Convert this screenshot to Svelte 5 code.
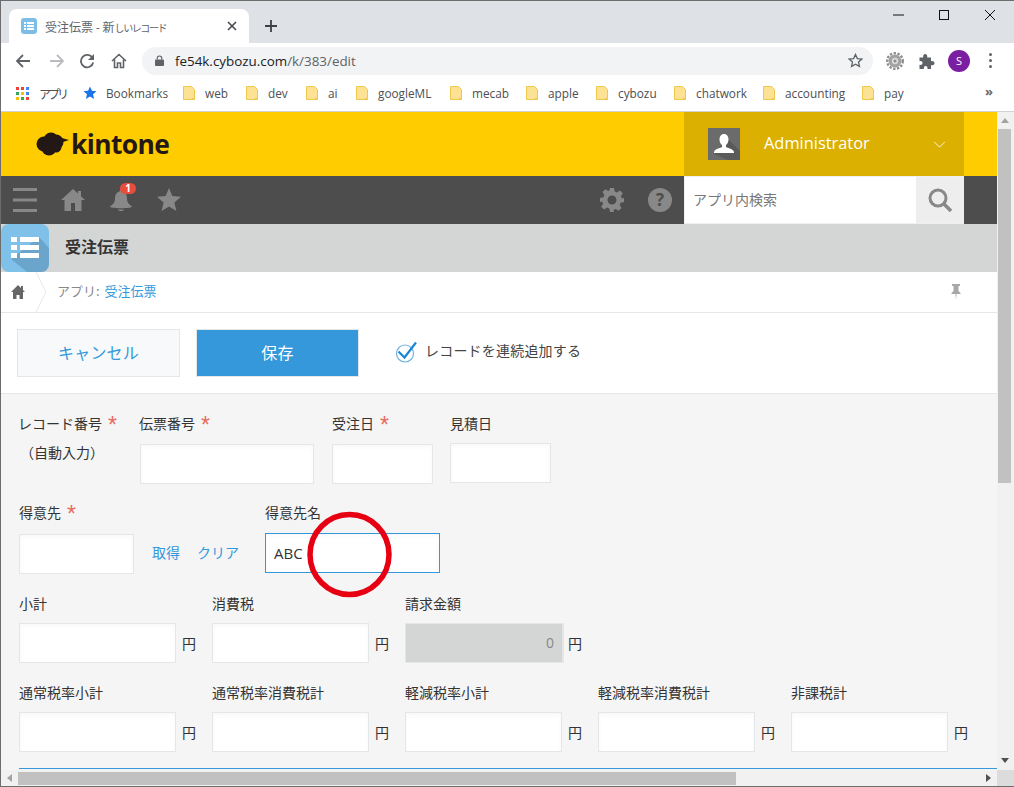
<script>
  const bookmarks = [
    { name: 'web', w: 63 }, { name: 'dev', w: 60 }, { name: 'ai', w: 50 }, { name: 'googleML', w: 94 },
    { name: 'mecab', w: 76 }, { name: 'apple', w: 70 }, { name: 'cybozu', w: 78 }, { name: 'chatwork', w: 89 },
    { name: 'accounting', w: 99 }, { name: 'pay', w: 60 }
  ];
  const row3 = [
    { label: '小計' }, { label: '消費税' }, { label: '請求金額', disabled: true }
  ];
  const row4 = ['通常税率小計', '通常税率消費税計', '軽減税率小計', '軽減税率消費税計', '非課税計'];
</script>

<div class="window">
  <div class="tabstrip">
    <div class="tab">
      <svg class="favicon" viewBox="0 0 16 16" width="16" height="16"><rect width="16" height="16" rx="3" fill="#7dbde6"/><path d="M3 4h2v2H3zM6 4h7v2H6zM3 7h2v2H3zM6 7h7v2H6zM3 10h2v2H3zM6 10h7v2H6z" fill="#fff"/></svg>
      <span class="tabtitle">受注伝票 - 新<span class="kana">しいレコード</span></span>
      <svg class="tabx" viewBox="0 0 10 10" width="10" height="10"><path d="M1 1l8 8M9 1l-8 8" stroke="#45484c" stroke-width="1.6"/></svg>
    </div>
    <svg class="newtab" viewBox="0 0 12 12" width="12" height="12"><path d="M6 0v12M0 6h12" stroke="#3c4043" stroke-width="1.8"/></svg>
    <div class="winctl">
      <svg viewBox="0 0 46 20" width="46" height="20"><path d="M18 10h11" stroke="#111" stroke-width="1"/></svg>
      <svg viewBox="0 0 46 20" width="46" height="20"><rect x="18.5" y="5.5" width="9" height="9" fill="none" stroke="#111"/></svg>
      <svg viewBox="0 0 46 20" width="46" height="20"><path d="M18 5l10 10M28 5l-10 10" stroke="#111" stroke-width="1"/></svg>
    </div>
  </div>

  <div class="toolbar">
    <svg class="nav back" viewBox="0 0 16 16" width="16" height="16"><path d="M15 8H2M8 2L2 8l6 6" fill="none" stroke="#5f6368" stroke-width="1.8"/></svg>
    <svg class="nav fwd" viewBox="0 0 16 16" width="16" height="16"><path d="M1 8h13M8 2l6 6-6 6" fill="none" stroke="#b9bbbe" stroke-width="1.8"/></svg>
    <svg class="nav" viewBox="0 0 16 16" width="16" height="16"><path d="M13.5 5A6.2 6.2 0 1 0 14.2 9.5" fill="none" stroke="#5f6368" stroke-width="1.8"/><path d="M15 1v6H9z" fill="#5f6368"/></svg>
    <svg class="nav" viewBox="0 0 16 16" width="16" height="16"><path d="M1 8l7-6.500L15 8M3.500 6.500V14.500h3V10h3v4.500h3V6.500" fill="none" stroke="#5f6368" stroke-width="1.600"/></svg>
    <div class="omnibox">
      <svg viewBox="0 0 10 12" width="9" height="11"><path d="M2.500 5V3.500a2.500 2.500 0 0 1 5 0V5" fill="none" stroke="#5f6368" stroke-width="1.300"/><rect y="5" width="10" height="7" rx="1" fill="#5f6368"/></svg>
      <span class="url">fe54k.cybozu.com<span class="urlpath">/k/383/edit</span></span>
      <svg class="ostar" viewBox="0 0 16 16" width="15" height="15"><path d="M8 1.500l2 4.400 4.800.5-3.600 3.200 1 4.700L8 12l-4.200 2.300 1-4.700L1.200 6.400 6 5.900z" fill="none" stroke="#5f6368" stroke-width="1.400"/></svg>
    </div>
    <svg class="ext" viewBox="0 0 18 18" width="18" height="18"><circle cx="9" cy="9" r="7.800" fill="none" stroke="#8e8e8e" stroke-width="2.400" stroke-dasharray="2.400 1.500"/><circle cx="9" cy="9" r="6.500" fill="#a2a2a2"/><circle cx="9" cy="9" r="3.200" fill="#dadada"/><circle cx="9" cy="9" r="1.500" fill="#8e8e8e"/></svg>
    <svg class="ext2" viewBox="0 0 16 16" width="16" height="16"><path d="M.5 4.500h3.700C3.800 2.500 4.800 1 6.200 1s2.400 1.500 2 3.500H12v3.700c2-.4 3.500.6 3.500 2s-1.500 2.400-3.500 2V16H8.500c.4-2-.6-3-1.800-3S4.500 14 4.900 16H.5v-4.200c1.800.4 3-.4 3-1.800S2.300 7.800.5 8.200z" fill="#5f6368"/></svg>
    <div class="avatar">S</div>
    <div class="dots"><i></i><i></i><i></i></div>
  </div>

  <div class="bookmarks">
    <svg class="apps" viewBox="0 0 13 13" width="13" height="13">
      <path d="M0 0h3v3H0z" fill="#ea4335"/><path d="M5 0h3v3H5z" fill="#ea4335"/><path d="M10 0h3v3h-3z" fill="#4285f4"/>
      <path d="M0 5h3v3H0z" fill="#34a853"/><path d="M5 5h3v3H5z" fill="#fbbc05"/><path d="M10 5h3v3h-3z" fill="#4285f4"/>
      <path d="M0 10h3v3H0z" fill="#fbbc05"/><path d="M5 10h3v3H5z" fill="#34a853"/><path d="M10 10h3v3h-3z" fill="#ea4335"/>
    </svg>
    <span class="bmtext appsl">アプリ</span>
    <svg class="bmstar" viewBox="0 0 14 14" width="14" height="14"><path d="M7 .5l1.900 4.300 4.600.4-3.500 3.100 1.100 4.600L7 10.500l-4.100 2.400L4 8.300.5 5.200l4.600-.4z" fill="#1a73e8"/></svg>
    <span class="bmtext bml">Bookmarks</span>
    {#each bookmarks as b}
      <div class="bm" style="width:{b.w}px">
        <svg viewBox="0 0 12 14" width="12" height="14"><path d="M.5.5h8l3 3v10H.5z" fill="#fde293" stroke="#eec94d"/><path d="M9 12h2.500v1.500H9z" fill="#eec94d"/></svg>
        <span class="bmtext">{b.name}</span>
      </div>
    {/each}
    <span class="more">»</span>
  </div>

  <div class="viewport">
    <div class="main">
      <header class="yellow">
        <div class="logo">
          <svg viewBox="0 0 33 24" width="33" height="24"><g fill="#231815"><circle cx="8" cy="12" r="7.500"/><circle cx="15" cy="8" r="7.500"/><circle cx="20" cy="10" r="7.500"/><circle cx="13" cy="16" r="7.500"/><circle cx="20" cy="15" r="5.500"/><path d="M22 5l11 3-9 3z"/></g></svg>
          <span>kintone</span>
        </div>
        <div class="user">
          <div class="uicon">
            <svg viewBox="0 0 32 32" width="32" height="32"><rect width="32" height="32" fill="#6b6b6b"/><path d="M19 10l13 13v9H20L6 26z" fill="#5a5a5a"/><path d="M16 6c-3 0-4.500 2.500-4.500 5.500 0 2.500 1 4.500 2.500 5.500v2c-2 1.200-7 1.500-8 5v1h20v-1c-1-3.500-6-3.800-8-5v-2c1.500-1 2.500-3 2.500-5.500C20.500 8.500 19 6 16 6z" fill="#fff"/></svg>
          </div>
          <span class="uname">Administrator</span>
          <svg class="caret" viewBox="0 0 14 8" width="13" height="7"><path d="M1 1l6 6 6-6" fill="none" stroke="#fff" stroke-width="1"/></svg>
        </div>
      </header>

      <nav class="dark">
        <div class="dark-left">
          <svg viewBox="0 0 24 24" width="24" height="24"><path d="M0 0h24v3H0zM0 10.500h24v3H0zM0 21h24v3H0z" fill="#888"/></svg>
          <svg viewBox="0 0 24 24" width="24" height="24"><path d="M12 1L0 12h3.500v11h6.500v-8h4v8h6.500V12H24l-4-3.700V3h-3v2.600z" fill="#888"/></svg>
          <div class="bell">
            <svg viewBox="0 0 24 24" width="24" height="24"><path d="M12 2c-1 0-1.500.7-1.500 1.500C7 4.500 6 7.500 6 11c0 3-1.500 5-5 7.500 0 1 4 1.700 11 1.700s11-.7 11-1.700c-3.500-2.500-5-4.500-5-7.500 0-3.500-1-6.500-4.500-7.500C13.500 2.700 13 2 12 2zM9 21.500h6c-.5 1-1.500 1.500-3 1.500s-2.500-.5-3-1.500z" fill="#888"/></svg>
            <span class="badge">1</span>
          </div>
          <svg viewBox="0 0 24 24" width="24" height="24"><path d="M12 0l3.300 8 8.700.7-6.600 5.700 2 8.600L12 18.400 4.600 23l2-8.600L0 8.700 8.700 8z" fill="#888"/></svg>
        </div>
        <div class="dark-right">
          <svg viewBox="0 0 24 24" width="24" height="24"><path fill-rule="evenodd" d="M10 0h4l.7 3.400 2.300 1 3-1.900 2.800 2.800-1.900 3 1 2.300L24 10v4l-3.400.7-1 2.300 1.900 3-2.800 2.800-3-1.900-2.300 1L14 24h-4l-.7-3.400-2.300-1-3 1.900-2.800-2.800 1.900-3-1-2.300L0 14v-4l3.400-.7 1-2.300-1.900-3L5.300 1.200l3 1.900 1-.7zM12 7.500a4.500 4.500 0 1 0 0 9 4.500 4.500 0 0 0 0-9z" fill="#888"/></svg>
          <div class="help">?</div>
        </div>
        <div class="search">
          <span class="sinput">アプリ内検索</span>
          <div class="sbtn">
            <svg viewBox="0 0 24 24" width="24" height="24"><circle cx="10" cy="10" r="8" fill="none" stroke="#888" stroke-width="3"/><path d="M15.500 15.500L23 23" stroke="#888" stroke-width="3.500"/></svg>
          </div>
        </div>
      </nav>

      <div class="apptitle">
        <div class="appicon">
          <svg viewBox="0 0 48 48" width="48" height="48"><path d="M0 0h48v48H0z" fill="#7fc1e8"/><path d="M10 35L38 13 48 24v24H26z" fill="#6ba5cc"/><path d="M10 13h6v5h-6zM19 13h19v5H19zM10 21h6v5h-6zM19 21h19v5H19zM10 29h6v5h-6zM19 29h19v5H19z" fill="#fff"/></svg>
        </div>
        <span>受注伝票</span>
      </div>

      <div class="crumbs">
        <svg class="chome" viewBox="0 0 14 14" width="14" height="14"><path d="M7 0L0 7h2v7h3.500v-4h3v4H12V7h2l-2-2V1h-2v2z" fill="#666"/></svg>
        <svg class="cchev" viewBox="0 0 12 40" width="12" height="40"><path d="M1 0l10 20L1 40" fill="none" stroke="#e3e7e8"/></svg>
        <span class="ctext">アプリ: <a href="#top">受注伝票</a></span>
        <svg class="pin" viewBox="0 0 10 16" width="10" height="16"><path d="M1 0h8v2H7.500v5l2 2v1H5.500l-.5 6-.5-6H.5V9l2-2V2H1z" fill="#a8a8a8"/></svg>
      </div>

      <div class="actions">
        <button class="cancel">キャンセル</button>
        <button class="save">保存</button>
        <svg class="check" viewBox="0 0 22 22" width="22" height="22"><circle cx="10" cy="12.500" r="8.500" fill="none" stroke="#6fb3e0" stroke-width="1.200"/><path d="M3.500 10.500l6 6L21 1.500" fill="none" stroke="#1b87d4" stroke-width="2.200"/></svg>
        <span class="chlabel">レコードを連続追加する</span>
      </div>

      <div class="form">
        <div class="row r1">
          <div class="f f-auto">
            <div class="lbl shift">レコード番号<em>*</em></div>
            <div class="auto">（自動入力）</div>
          </div>
          <div class="f"><div class="lbl shift">伝票番号<em>*</em></div><div class="inp w174"></div></div>
          <div class="f"><div class="lbl">受注日<em class="wide">*</em></div><div class="inp w101"></div></div>
          <div class="f up1"><div class="lbl">見積日</div><div class="inp w101"></div></div>
        </div>

        <div class="row r2">
          <div class="f"><div class="lbl">得意先<em>*</em></div><div class="inp w115"></div></div>
          <div class="lookup"><a href="#top">取得</a><a href="#top">クリア</a></div>
          <div class="f up1"><div class="lbl">得意先名</div><div class="inp w175 focus">ABC</div></div>
        </div>

        <div class="row r3">
          {#each row3 as c}
            <div class="f"><div class="lbl">{c.label}</div>
              <div class="unit">
                {#if c.disabled}<div class="inp w159 dis">0</div>{:else}<div class="inp w157"></div>{/if}
                <span class:tight={c.disabled}>円</span>
              </div>
            </div>
          {/each}
        </div>

        <div class="row r4">
          {#each row4 as l}
            <div class="f"><div class="lbl">{l}</div>
              <div class="unit"><div class="inp w157"></div><span>円</span></div>
            </div>
          {/each}
        </div>
        <div class="rule"></div>
      </div>
    </div>
    <div class="vbar">
      <svg viewBox="0 0 8 5" width="8" height="5"><path d="M4 0l4 5H0z" fill="#a3a3a3"/></svg>
      <div class="vthumb"></div>
      <svg class="vdown" viewBox="0 0 8 5" width="8" height="5"><path d="M0 0h8L4 5z" fill="#505050"/></svg>
    </div>
  </div>

  <div class="hbar">
    <svg viewBox="0 0 5 8" width="5" height="8"><path d="M5 0v8L0 4z" fill="#a3a3a3"/></svg>
    <div class="hthumb"></div>
    <svg class="hright" viewBox="0 0 5 8" width="5" height="8"><path d="M0 0v8l5-4z" fill="#505050"/></svg>
    <div class="corner"></div>
  </div>

  <svg class="annot" viewBox="0 0 90 90" width="90" height="90"><ellipse cx="44.500" cy="44.500" rx="39.500" ry="40" fill="none" stroke="#e60012" stroke-width="5.500"/></svg>
</div>

<style>
  :global(body) { margin: 0; background: #fff; overflow: hidden; }
  .window { position: relative; width: 1014px; height: 787px; overflow: hidden; box-sizing: border-box; border-left: 1px solid #6d6d6d; border-top: 1px solid #6d6d6d; border-bottom: 1px solid #6d6d6d; font-family: "Noto Sans CJK JP", "Open Sans", sans-serif; color: #333; display: flex; flex-direction: column; }

  .tabstrip { height: 42px; background: #dee1e6; display: flex; align-items: flex-end; padding-left: 8px; flex: none; }
  .tab { width: 240px; height: 34px; background: #fff; border-radius: 8px 8px 0 0; display: flex; align-items: center; padding-left: 12px; box-sizing: border-box; }
  .tabtitle { font-size: 12px; color: #5f6368; margin-left: 8px; width: 182px; white-space: nowrap; }
  .kana { font-size: 10px; letter-spacing: -1.400px; }
  .tabx { margin-left: 0; }
  .newtab { margin: 0 0 11px 16px; }
  .winctl { display: flex; margin-left: auto; align-self: flex-start; margin-top: 4px; gap: 0; padding-right: 1px; }

  .toolbar { height: 35px; background: #fff; display: flex; align-items: center; flex: none; padding-left: 14px; }
  .nav { margin-right: 16px; flex: none; }
  .back { margin-right: 18px; }
  .fwd { margin-right: 14px; }
  .omnibox { width: 731px; height: 28px; margin-left: -1px; background: #f1f3f4; border-radius: 14px; display: flex; align-items: center; padding: 0 10px 0 13px; box-sizing: border-box; }
  .url { font-family: "Open Sans", sans-serif; font-size: 13.400px; color: #202124; margin-left: 11px; flex: 1; }
  .urlpath { color: #5f6368; }
  .ext { margin-left: 13px; }
  .ext2 { margin-left: 15px; }
  .avatar { width: 22px; height: 22px; border-radius: 50%; background: #7b1fa2; color: #fff; font: 11px/22px "Open Sans", sans-serif; text-align: center; margin-left: 13px; }
  .dots { margin-left: 19px; display: flex; flex-direction: column; gap: 3px; }
  .dots i { display: block; width: 3px; height: 3px; border-radius: 50%; background: #5f6368; }

  .bookmarks { height: 30px; background: #fff; display: flex; align-items: center; flex: none; padding: 0 0 3px 15px; border-bottom: 1px solid #d0d2d5; }
  .bmtext { font-family: "Open Sans", "Noto Sans CJK JP", sans-serif; font-size: 11.800px; color: #4d4f53; white-space: nowrap; }
  .appsl { margin-left: 10px; width: 44px; font-family: "Noto Sans CJK JP", sans-serif; font-size: 12px; letter-spacing: -3px; }
  .bml { margin-left: 9px; width: 77px; }
  .bm { display: flex; align-items: center; gap: 10px; flex: none; }
  .more { position: absolute; left: 984px; top: 82px; font: bold 13px/16px "Open Sans", sans-serif; color: #666; }

  .viewport { flex: 1; display: flex; min-height: 0; }
  .main { width: 996px; flex: none; display: flex; flex-direction: column; background: #f5f5f5; overflow: hidden; }

  .yellow { height: 64px; flex: none; background: #fc0; display: flex; justify-content: space-between; padding-right: 33px; }
  .logo { display: flex; align-items: center; gap: 2px; padding-left: 35px; color: #231815; font: bold 26.400px/1 "Open Sans", sans-serif; letter-spacing: -0.6px; }
  .user { width: 280px; background: #dbb000; display: flex; align-items: center; padding-left: 24px; box-sizing: border-box; }
  .uicon { width: 32px; height: 32px; }
  .uname { margin-left: 24px; color: #fff; font: 16.400px "Open Sans", sans-serif; flex: 1; padding-bottom: 3px; }
  .caret { margin-right: 18px; }

  .dark { height: 48px; flex: none; background: #4d4d4d; display: flex; align-items: center; padding-right: 33px; }
  .dark-left { display: flex; align-items: center; gap: 24px; padding-left: 12px; flex: 1; }
  .bell { position: relative; width: 24px; height: 24px; }
  .badge { position: absolute; left: 11px; top: -5px; width: 16px; height: 11px; border-radius: 6px; background: #e74c3c; color: #fff; font: bold 10px/11px "Open Sans", sans-serif; text-align: center; }
  .dark-right { display: flex; align-items: center; gap: 24px; padding-right: 12px; }
  .help { width: 24px; height: 24px; border-radius: 50%; background: #888; color: #4d4d4d; font: bold 17px/24px "Open Sans", sans-serif; text-align: center; }
  .search { width: 280px; height: 48px; display: flex; background: #fff; box-sizing: border-box; border: 1px solid #f0f0f0; border-width: 1px 0 1px 1px; }
  .sinput { flex: 1; font-size: 14px; line-height: 44px; padding-left: 8px; color: #777; }
  .sbtn { width: 48px; background: #eee; display: flex; align-items: center; justify-content: center; }

  .apptitle { height: 48px; flex: none; background: #d4d6d6; display: flex; align-items: center; }
  .appicon { width: 48px; height: 48px; border-radius: 8px; overflow: hidden; }
  .apptitle span { margin-left: 16px; font-weight: 700; font-size: 16px; line-height: 44px; padding-bottom: 4px; color: #333; }

  .crumbs { height: 41px; flex: none; background: #fff; display: flex; align-items: center; padding-left: 10px; border-bottom: 1px solid #e3e7e8; box-sizing: border-box; }
  .cchev { margin-left: 10px; }
  .ctext { margin-left: 10px; font-size: 13px; color: #888; flex: 1; padding-bottom: 3px; }
  .ctext a { color: #3498db; text-decoration: none; margin-left: 2px; }
  .pin { margin-right: 36px; }

  .actions { height: 80px; flex: none; background: #fff; display: flex; align-items: center; padding-left: 16px; border-bottom: 1px solid #e3e7e8; }
  .actions button { height: 48px; font: 16px "Noto Sans CJK JP", sans-serif; box-sizing: border-box; padding: 0 0 2px; letter-spacing: .2px; }
  .cancel { width: 163px; background: #f7f9fa; border: 1px solid #e3e7e8; color: #3498db; }
  .save { width: 163px; margin-left: 16px; background: #3498db; border: 1px solid #e3e7e8; color: #fff; }
  .check { margin: 0 0 2px 36px; }
  .chlabel { margin-left: 8px; font-size: 14px; letter-spacing: .2px; color: #444; padding-bottom: 7px; }

  .form { flex: 1; padding-left: 18px; min-height: 0; }
  .row { display: flex; }
  .r1 { padding-top: 17px; }
  .r2 { padding-top: 16px; }
  .r3 { padding-top: 17px; gap: 15px; }
  .r4 { padding-top: 17px; gap: 15px; }
  .f { display: flex; flex-direction: column; margin-right: 18px; }
  .f:has(.w101):not(.up1) { margin-right: 17px; }
  .r3 .f, .r4 .f { margin-right: 0; }
  .f-auto { width: 103px; }
  .lbl { height: 24px; font-size: 14px; line-height: 24px; color: #333; white-space: nowrap; margin-bottom: 8px; }
  .lbl.shift { margin-left: -1px; }
  .r1 .lbl { margin-bottom: 9px; }
  .r1 .up1 .lbl { margin-bottom: 8px; }
  .r2 .lbl { margin-bottom: 10px; }
  .r2 .up1 .lbl { margin-bottom: 9px; }
  .lbl em { font-style: normal; font-family: "Liberation Sans", sans-serif; color: #e96a5c; font-size: 23px; margin-left: 6px; line-height: 0; position: relative; top: 4px; }
  .lbl em.wide { margin-left: 6px; }
  .auto { font-size: 14px; line-height: 20px; padding-left: 1px; margin-top: -2px; color: #333; }
  .inp { height: 40px; box-sizing: border-box; background: #fff; border: 1px solid #e3e7e8; box-shadow: inset 0 2px 4px rgba(0,0,0,.03); font-size: 14px; line-height: 38px; padding: 0 8px; }
  .w174 { width: 174px; } .w101 { width: 101px; } .w115 { width: 115px; } .w175 { width: 175px; } .w157 { width: 157px; } .w159 { width: 159px; }
  .focus { border-color: #3498db; font-family: "Open Sans", sans-serif; font-size: 15px; color: #333; }
  .dis { background: #d4d6d6; border-right: 2px solid #e3e7e8; text-align: right; color: #888; box-shadow: none; font-family: "Open Sans", sans-serif; }
  .unit { display: flex; align-items: center; gap: 6px; }
  .unit span { font-size: 14px; width: 15px; color: #333; }
  .unit span.tight { margin-left: -2px; }
  .lookup { display: flex; gap: 17px; padding-top: 32px; line-height: 40px; font-size: 14px; margin-right: 26px; }
  .lookup a { color: #3498db; text-decoration: none; }
  .rule { height: 1px; background: #3498db; margin: 16px -18px 0 0; }

  .vbar { flex: 1; background: #f1f1f1; display: flex; flex-direction: column; align-items: flex-start; padding: 6px 0 0 1px; box-sizing: border-box; }
  .vbar svg { margin-left: 3px; }
  .vthumb { width: 13px; height: 354px; background: #c1c1c1; margin-top: 6px; }
  .vbar .vdown { margin-top: auto; margin-bottom: 7px; }
  .hbar { height: 16px; flex: none; background: #f1f1f1; display: flex; align-items: center; padding-left: 6px; box-sizing: border-box; }
  .hthumb { width: 718px; height: 13px; background: #c1c1c1; margin-left: 6px; }
  .hright { margin-left: auto; margin-right: 6px; }
  .corner { width: 17px; height: 16px; background: #dcdcdc; }

  .annot { position: absolute; left: 304px; top: 509px; }
</style>
